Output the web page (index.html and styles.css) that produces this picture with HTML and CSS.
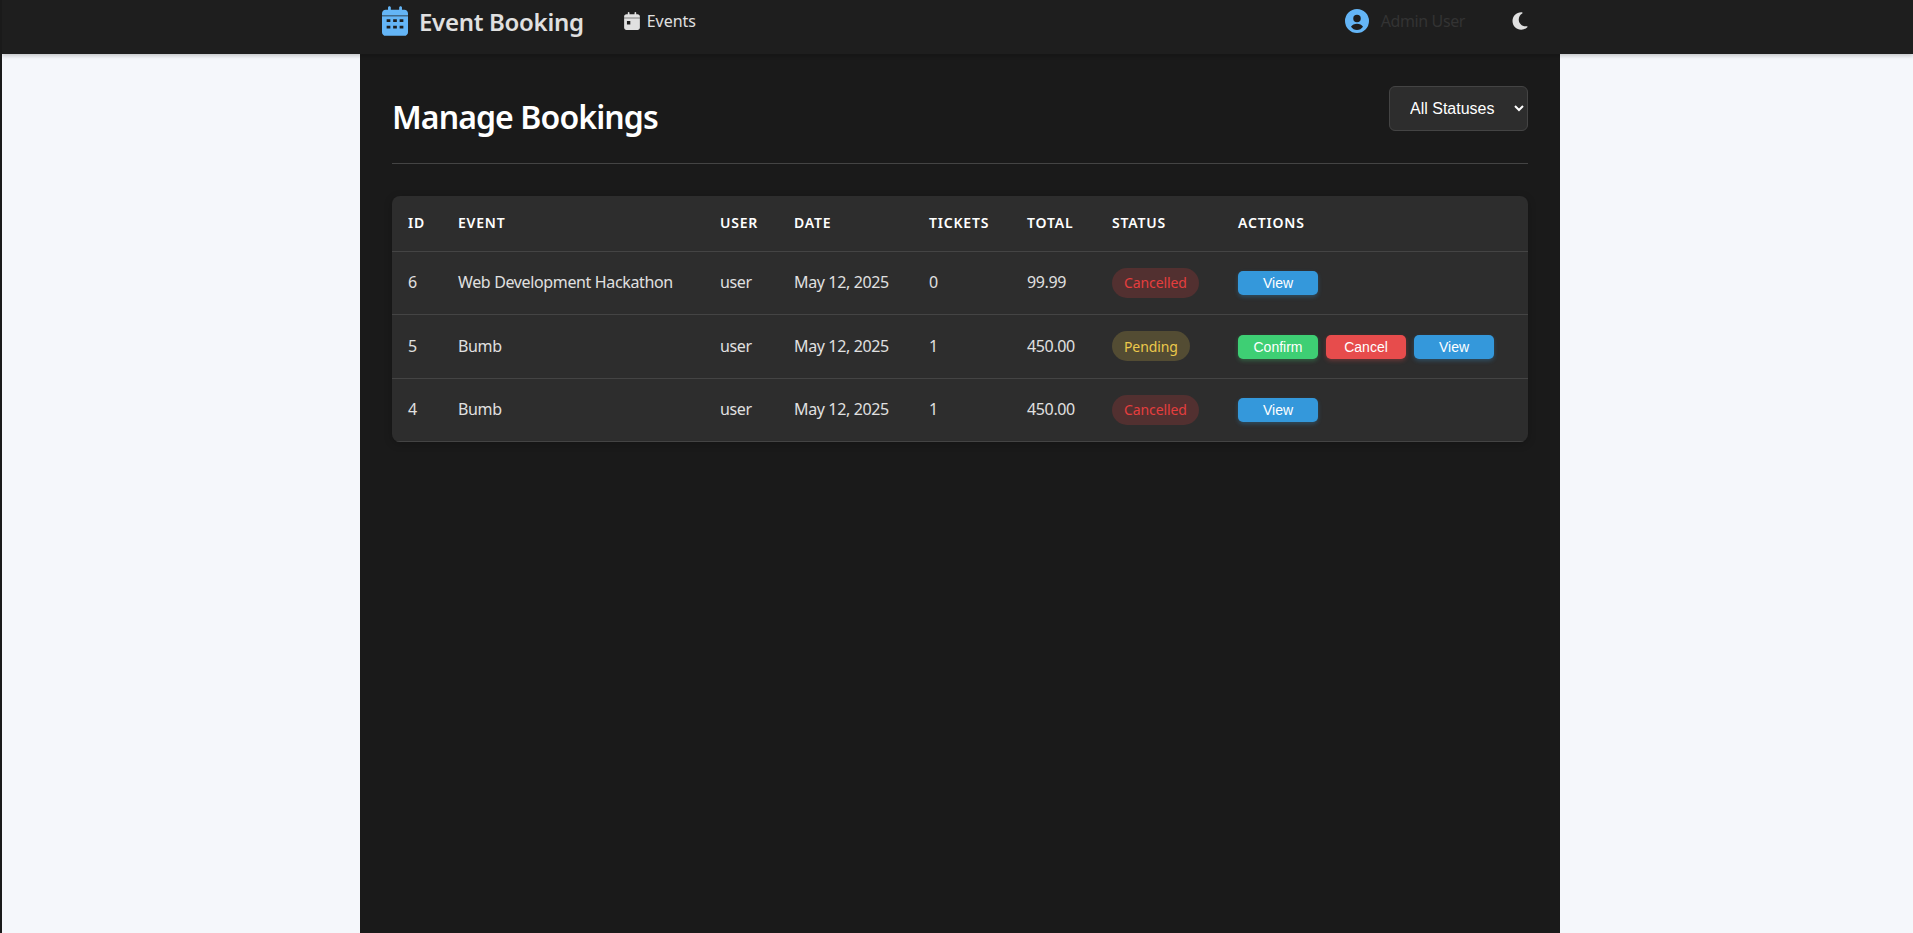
FILE: index.html
```html
<!DOCTYPE html>
<html lang="en">
<head>
  <meta charset="UTF-8">
  <title>Manage Bookings – Event Booking</title>
  <link rel="stylesheet" href="styles.css">
</head>
<body>
  <nav class="navbar">
    <div class="nav-inner">
      <a class="brand" href="#">
        <svg class="brand-icon" viewBox="0 0 448 512"><path d="M152 24c0-13.300-10.700-24-24-24s-24 10.700-24 24V64H64C28.700 64 0 92.700 0 128v32H448v-32c0-35.300-28.700-64-64-64H344V24c0-13.300-10.700-24-24-24s-24 10.700-24 24V64H152V24z" /><path d="M0 176H448V448c0 35 -29 64 -64 64H64c-35 0-64-29-64-64z M80 224v48h64v-48z M192 224v48h64v-48z M304 224v48h64v-48z M80 336v48h64v-48z M192 336v48h64v-48z M304 336v48h64v-48z" fill-rule="evenodd"/></svg>
        <span>Event Booking</span>
      </a>
      <a class="nav-link" href="#">
        <svg class="nav-icon" viewBox="0 0 448 512"><path d="M128 0c13.300 0 24 10.700 24 24V64H296V24c0-13.300 10.700-24 24-24s24 10.700 24 24V64h40c35.300 0 64 28.700 64 64v32H0v-32C0 92.700 28.700 64 64 64h40V24c0-13.300 10.700-24 24-24z" /><path d="M0 176H448V448c0 35-29 64-64 64H64c-35 0-64-29-64-64z M80 256v96h96v-96z" fill-rule="evenodd"/></svg>
        <span>Events</span>
      </a>
      <div class="nav-right">
        <a class="nav-user" href="#">
          <svg class="user-icon" viewBox="0 0 512 512"><path d="M256 512A256 256 0 1 0 256 0a256 256 0 1 0 0 512zM176 204a80 80 0 1 1 160 0 80 80 0 1 1-160 0zM256 312c55 0 104 24 128 64 -30 42 -76 72 -128 72s-98-30-128-72c24-40 73-64 128-64z" fill-rule="evenodd"/></svg>
          <span>Admin User</span>
        </a>
        <button class="theme-toggle" type="button">
          <svg class="moon-icon" viewBox="0 0 384 512"><path d="M223.500 32C100 32 0 132.300 0 256S100 480 223.500 480c60.600 0 115.500-24.200 155.800-63.400c5-4.900 6.300-12.500 3.100-18.700s-10.100-9.700-17-8.500c-9.800 1.700-19.800 2.600-30.100 2.600c-96.900 0-175.500-78.800-175.500-176c0-65.800 36-123.100 89.300-153.300c6.100-3.500 9.200-10.500 7.700-17.300s-7.300-11.900-14.300-12.500c-6.300-.5-12.600-.8-19-.8z"/></svg>
        </button>
      </div>
    </div>
  </nav>

  <main class="container">
    <div class="page-header">
      <h1>Manage Bookings</h1>
      <select class="status-filter">
        <option>All Statuses</option>
        <option>Pending</option>
        <option>Confirmed</option>
        <option>Cancelled</option>
      </select>
    </div>

    <div class="table-wrap">
      <table class="bookings">
        <thead>
          <tr>
            <th class="col-id">ID</th>
            <th class="col-event">Event</th>
            <th class="col-user">User</th>
            <th class="col-date">Date</th>
            <th class="col-tickets">Tickets</th>
            <th class="col-total">Total</th>
            <th class="col-status">Status</th>
            <th>Actions</th>
          </tr>
        </thead>
        <tbody>
          <tr>
            <td>6</td>
            <td>Web Development Hackathon</td>
            <td>user</td>
            <td>May 12, 2025</td>
            <td>0</td>
            <td>99.99</td>
            <td class="cell-control"><span class="badge cancelled">Cancelled</span></td>
            <td class="cell-control"><div class="actions"><button class="btn view">View</button></div></td>
          </tr>
          <tr>
            <td>5</td>
            <td>Bumb</td>
            <td>user</td>
            <td>May 12, 2025</td>
            <td>1</td>
            <td>450.00</td>
            <td class="cell-control"><span class="badge pending">Pending</span></td>
            <td class="cell-control">
              <div class="actions">
                <button class="btn confirm">Confirm</button>
                <button class="btn cancel">Cancel</button>
                <button class="btn view">View</button>
              </div>
            </td>
          </tr>
          <tr>
            <td>4</td>
            <td>Bumb</td>
            <td>user</td>
            <td>May 12, 2025</td>
            <td>1</td>
            <td>450.00</td>
            <td class="cell-control"><span class="badge cancelled">Cancelled</span></td>
            <td class="cell-control"><div class="actions"><button class="btn view">View</button></div></td>
          </tr>
        </tbody>
      </table>
    </div>
  </main>
</body>
</html>
```

FILE: styles.css
```css
* {
  box-sizing: border-box;
}

html,
body {
  height: 100%;
}

body {
  margin: 0;
  border-left: 2px solid #1a1a1a;
  background: #f5f7fb;
  color: #e0e0e0;
  font-family: "Noto Sans", sans-serif;
  overflow: hidden;
}

a {
  color: inherit;
  text-decoration: none;
}

.navbar {
  height: 54px;
  background: #1e1e1e;
  box-shadow: 0 2px 4px rgba(0, 0, 0, 0.2);
  position: relative;
}

.nav-inner {
  width: 1200px;
  margin-left: 358px;
  padding: 6px 32px 0 22px;
  display: flex;
  align-items: flex-start;
}

.brand {
  display: flex;
  align-items: center;
  gap: 11px;
  height: 30px;
  font-size: 24px;
  font-weight: 600;
  letter-spacing: -0.3px;
  color: #e0e0e0;
}

.brand-icon {
  width: 26px;
  height: 30px;
  fill: #64b5f6;
}

.nav-link {
  display: flex;
  align-items: center;
  gap: 7px;
  height: 30px;
  margin-left: 40px;
  font-size: 16px;
}

.nav-icon {
  width: 16px;
  height: 18px;
  fill: #e0e0e0;
}

.nav-right {
  margin-left: auto;
  display: flex;
  align-items: center;
  height: 30px;
}

.nav-user {
  display: flex;
  align-items: center;
  gap: 12px;
  font-size: 16px;
  letter-spacing: -0.4px;
  color: #333;
}

.user-icon {
  width: 24px;
  height: 24px;
  fill: #64b5f6;
}

.theme-toggle {
  margin-left: 47px;
  padding: 0;
  width: 16px;
  height: 20px;
  background: none;
  border: none;
  display: flex;
}

.moon-icon {
  width: 16px;
  height: 20px;
  fill: #e0e0e0;
}

.container {
  width: 1200px;
  height: calc(100% - 54px);
  margin-left: 358px;
  padding: 32px;
  background: #1a1a1a;
}

.page-header {
  display: flex;
  justify-content: space-between;
  align-items: flex-start;
  height: 78px;
  margin-bottom: 32px;
  border-bottom: 1px solid #444;
}

h1 {
  margin: 9px 0 0;
  font-size: 32px;
  font-weight: 600;
  letter-spacing: -0.9px;
  color: #fff;
}

.status-filter {
  width: 139px;
  height: 45px;
  padding: 0 16px;
  background: #2d2d2d;
  border: 1px solid #444;
  border-radius: 6px;
  color: #fff;
  font-family: "Liberation Sans", sans-serif;
  font-size: 16px;
}

.table-wrap {
  background: #2d2d2d;
  border-radius: 8px;
  overflow: hidden;
  box-shadow: 0 2px 8px rgba(0, 0, 0, 0.2);
}

.bookings {
  width: 100%;
  border-collapse: collapse;
  table-layout: fixed;
}

th,
td {
  text-align: left;
  border-bottom: 1px solid #444;
}

th {
  height: 55px;
  padding: 0 16px 2px;
  font-size: 14px;
  font-weight: 600;
  letter-spacing: 0.8px;
  text-transform: uppercase;
  color: #fff;
}

td {
  height: 63.500px;
  padding: 0 16px 1px;
  font-size: 16px;
  letter-spacing: -0.36px;
  color: #e0e0e0;
}

td.cell-control {
  padding-bottom: 0;
}

.col-id { width: 50px; }
.col-event { width: 262px; }
.col-user { width: 74px; }
.col-date { width: 135px; }
.col-tickets { width: 98px; }
.col-total { width: 85px; }
.col-status { width: 126px; }

.badge {
  display: inline-block;
  padding: 5.500px 12px;
  border-radius: 20px;
  font-size: 14px;
  letter-spacing: -0.1px;
}

.badge.cancelled {
  background: rgba(229, 62, 62, 0.2);
  color: #e53e3e;
}

.badge.pending {
  background: rgba(236, 201, 75, 0.2);
  color: #ecc94b;
}

.actions {
  display: flex;
  gap: 8px;
  padding-top: 1px;
}

.btn {
  width: 80px;
  height: 24px;
  padding: 0;
  border: none;
  border-radius: 5px;
  color: #fff;
  font-family: "Liberation Sans", sans-serif;
  font-size: 14px;
}

.btn.view {
  background: #3498db;
  box-shadow: 0 2px 4px rgba(52, 152, 219, 0.3);
}

.btn.confirm {
  background: #3ecf74;
  box-shadow: 0 2px 4px rgba(62, 207, 116, 0.3);
}

.btn.cancel {
  background: #e74c4c;
  box-shadow: 0 2px 4px rgba(231, 76, 76, 0.3);
}
```
